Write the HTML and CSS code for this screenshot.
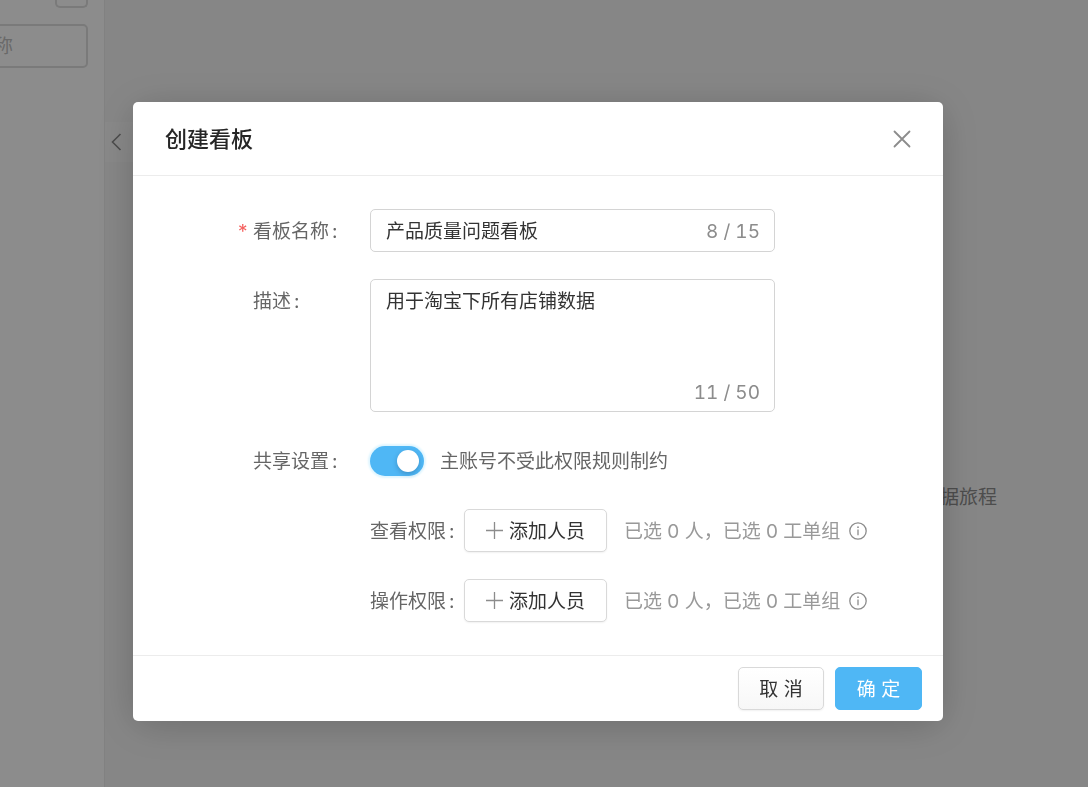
FILE: index.html
```html
<!DOCTYPE html>
<html lang="zh-CN">
<head>
<meta charset="utf-8">
<meta name="viewport" content="width=device-width, initial-scale=1">
<title>创建看板</title>
<link rel="stylesheet" href="styles.css">
</head>
<body>
<div class="app">
  <aside class="sidebar">
    <button class="sidebar-action" type="button" aria-label="新建"></button>
    <input class="sidebar-search" type="text" placeholder="称" aria-label="称">
  </aside>
  <main class="content">
    <button class="collapse" type="button" aria-label="收起">
      <svg width="12" height="18" viewBox="0 0 12 18" fill="none" stroke="currentColor" stroke-width="1.6"><path d="M9.5 1 1.5 9l8 8"/></svg>
    </button>
    <p class="content-tip">据旅程</p>
  </main>
</div>

<div class="overlay">
  <form class="modal" role="dialog" aria-modal="true" aria-labelledby="modal-title">
    <header class="modal-header">
      <h1 class="modal-title" id="modal-title">创建看板</h1>
      <button class="modal-close" type="button" aria-label="关闭">
        <svg width="18" height="18" viewBox="0 0 18 18" fill="none" stroke="currentColor" stroke-width="1.8" stroke-linecap="round"><path d="m1.5 1.5 15 15m0-15-15 15"/></svg>
      </button>
    </header>

    <div class="modal-body">
      <div class="form-row">
        <span class="required">*</span>
        <label class="label" for="board-name">看板名称<span class="colon">:</span></label>
        <div class="field">
          <input class="text-input" id="board-name" type="text" value="产品质量问题看板" maxlength="15">
          <span class="counter">8 / 15</span>
        </div>
      </div>
      <div class="form-row">
        <label class="label" for="board-desc">描述<span class="colon">:</span></label>
        <div class="field">
          <textarea class="text-area" id="board-desc" maxlength="50">用于淘宝下所有店铺数据</textarea>
          <span class="counter counter-bottom">11 / 50</span>
        </div>
      </div>
      <div class="form-row">
        <label class="label" for="share">共享设置<span class="colon">:</span></label>
        <div class="inline">
          <input class="switch" id="share" type="checkbox" role="switch" checked>
          <span class="switch-note">主账号不受此权限规则制约</span>
        </div>
      </div>
      <div class="form-row">
        <div class="inline">
          <span class="sub-label" id="view-label">查看权限<span class="colon">:</span></span>
          <button class="btn btn-add" type="button" aria-describedby="view-label">
            <svg class="plus" width="17" height="17" viewBox="0 0 17 17" stroke="currentColor" stroke-width="1.3"><path d="M8.5 0v17M0 8.5h17"/></svg>
            <span class="btn-text">添加人员</span>
          </button>
          <span class="summary">已选 0 人，已选 0 工单组</span>
          <svg class="info" width="18" height="18" viewBox="0 0 18 18" fill="none" stroke="currentColor" stroke-width="1.3"><circle cx="9" cy="9" r="8.2"/><path d="M9 7.6v5.6"/><circle cx="9" cy="5.2" r=".9" fill="currentColor" stroke="none"/></svg>
        </div>
      </div>
      <div class="form-row">
        <div class="inline">
          <span class="sub-label" id="edit-label">操作权限<span class="colon">:</span></span>
          <button class="btn btn-add" type="button" aria-describedby="edit-label">
            <svg class="plus" width="17" height="17" viewBox="0 0 17 17" stroke="currentColor" stroke-width="1.3"><path d="M8.5 0v17M0 8.5h17"/></svg>
            <span class="btn-text">添加人员</span>
          </button>
          <span class="summary">已选 0 人，已选 0 工单组</span>
          <svg class="info" width="18" height="18" viewBox="0 0 18 18" fill="none" stroke="currentColor" stroke-width="1.3"><circle cx="9" cy="9" r="8.2"/><path d="M9 7.6v5.6"/><circle cx="9" cy="5.2" r=".9" fill="currentColor" stroke="none"/></svg>
        </div>
      </div>
    </div>

    <footer class="modal-footer">
      <button class="btn btn-cancel" type="button">取 消</button>
      <button class="btn btn-primary" type="submit">确 定</button>
    </footer>
  </form>
</div>
</body>
</html>
```

FILE: styles.css
```css
*,
*::before,
*::after {
  box-sizing: border-box;
}

body {
  margin: 0;
  color: #666;
  font: 19px/27px Inter, "Noto Sans CJK SC", sans-serif;
}

button,
input,
textarea {
  margin: 0;
  font: inherit;
}

button {
  cursor: pointer;
}

svg {
  display: block;
  flex: none;
}

/* Page behind the dialog */
.app {
  display: flex;
  min-height: 100vh;
  overflow: hidden;
}

.sidebar {
  display: flex;
  flex: none;
  flex-direction: column;
  align-items: flex-end;
  gap: 16px;
  width: 105px;
  padding-right: 16px;
  border-right: 1px solid #ececec;
  background: #fff;
}

.sidebar-action {
  width: 33px;
  height: 8px;
  padding: 0;
  border: 2px solid #dedede;
  border-top: 0;
  border-radius: 0 0 5px 5px;
  background: #fff;
}

.sidebar-search {
  width: 104px;
  height: 44px;
  padding: 0 8px;
  border: 2px solid #dedede;
  border-radius: 5px;
  background: #fff;
}

.sidebar-search::placeholder {
  color: #bfbfbf;
}

.content {
  display: flex;
  flex: 1;
  align-items: center;
  justify-content: space-between;
  padding-right: 91px;
  background: #f5f5f5;
}

.collapse {
  display: grid;
  align-self: flex-start;
  place-items: center start;
  width: 28px;
  height: 40px;
  margin-top: 122px;
  padding: 0 6px;
  border: 0;
  background: #fafafa;
  color: #8c8c8c;
}

.content-tip {
  margin: 208px 0 0;
  color: #8c8c8c;
}

/* Dialog */
.overlay {
  position: fixed;
  inset: 0;
  display: flex;
  align-items: flex-start;
  justify-content: center;
  padding: 102px 24px 24px 12px;
  overflow: auto;
  background: rgba(0, 0, 0, 0.45);
}

.modal {
  width: 100%;
  max-width: 810px;
  border-radius: 5px;
  background: #fff;
  box-shadow: 0 5px 40px rgba(0, 0, 0, 0.2);
}

.modal-header {
  display: flex;
  align-items: center;
  justify-content: space-between;
  padding: 23px 32px 22px;
  border-bottom: 1px solid #ececec;
}

.modal-title {
  margin: 0;
  color: #262626;
  font-size: 22px;
  font-weight: 500;
  line-height: 28px;
}

.modal-close {
  padding: 0;
  border: 0;
  background: none;
  color: #8c8c8c;
}

.modal-body {
  display: grid;
  gap: 27px;
  padding: 33px 32px 33px 105px;
}

.form-row {
  display: grid;
  grid-template-columns: 15px 117px 1fr;
  min-height: 43px;
}

.required {
  color: #f5605e;
}

.required,
.label {
  height: 43px;
  line-height: 45px;
}

.label {
  grid-column: 2;
}

.colon {
  margin-left: 3px;
}

.field {
  position: relative;
  grid-column: 3;
  max-width: 405px;
}

.text-input,
.text-area {
  display: block;
  width: 100%;
  border: 1px solid #d4d4d4;
  border-radius: 5px;
  background: #fff;
  color: #333;
}

.text-input {
  height: 43px;
  padding: 0 80px 2px 15px;
}

.text-area {
  height: 133px;
  padding: 8px 15px;
  resize: none;
}

.counter {
  position: absolute;
  top: 9px;
  right: 15px;
  color: #8c8c8c;
  font-variant-numeric: tabular-nums;
}

.counter-bottom {
  top: auto;
  bottom: 6px;
}

.inline {
  display: flex;
  grid-column: 3;
  align-items: center;
  white-space: nowrap;
}

.switch {
  appearance: none;
  display: flex;
  align-items: center;
  width: 54px;
  height: 30px;
  padding: 0 5px;
  border-radius: 15px;
  background: #e0e0e0;
}

.switch::before {
  content: "";
  width: 22px;
  height: 22px;
  border-radius: 50%;
  background: #fff;
  box-shadow: 0 2px 5px rgba(0, 35, 70, 0.25);
}

.switch:checked {
  justify-content: flex-end;
  background: #4fb7f5;
  box-shadow: 0 0 2px 2px #e0f6ff;
}

.switch-note,
.sub-label,
.btn-text,
.summary {
  padding-top: 2px;
}

.switch-note {
  margin-left: 16px;
}

.sub-label {
  width: 94px;
}

.btn {
  height: 43px;
  padding: 2px 20px 0;
  border: 1px solid #d9d9d9;
  border-radius: 5px;
  background: #fff;
  box-shadow: 0 1px 2px rgba(0, 0, 0, 0.06);
  color: #333;
}

.btn-add {
  display: flex;
  align-items: center;
  gap: 6px;
  width: 143px;
  padding: 0 21px;
}

.plus {
  color: #8c8c8c;
}

.summary {
  margin-left: 17px;
  color: #999;
}

.info {
  margin-left: 9px;
  color: #8c8c8c;
}

.modal-footer {
  display: flex;
  justify-content: flex-end;
  gap: 11px;
  padding: 11px 21px;
  border-top: 1px solid #ececec;
}

.btn-cancel {
  width: 86px;
  background: linear-gradient(#fff, #f7f7f7);
}

.btn-primary {
  width: 87px;
  border-color: #4fb7f5;
  background: #4fb7f5;
  box-shadow: none;
  color: #fff;
}
```
